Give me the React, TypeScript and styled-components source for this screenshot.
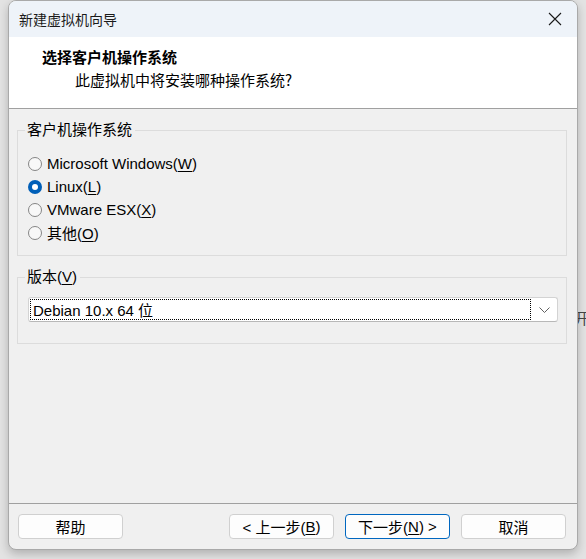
import React from "react";
import styled, { createGlobalStyle } from "styled-components";

const GlobalStyle = createGlobalStyle`
  html, body { margin: 0; padding: 0; }
  body {
    background: #e3e3e3;
    font-family: "Liberation Sans", "Noto Sans CJK SC", sans-serif;
    font-size: 15px;
    color: #000;
    overflow: hidden;
  }
`;

const Page = styled.div`
  position: relative;
  width: 586px;
  height: 559px;
  padding-left: 8px;
  box-sizing: border-box;
  overflow: hidden;
`;

const BehindText = styled.div`
  position: absolute;
  left: 574px;
  top: 307px;
  font-size: 15px;
  color: #444;
  font-family: "Noto Sans CJK SC", sans-serif;
`;

const Window = styled.div`
  position: relative;
  z-index: 1;
  width: 570px;
  height: 550px;
  box-sizing: border-box;
  border: 1px solid #a9a9a9;
  border-radius: 8px;
  background: #f0f0f0;
  display: flex;
  flex-direction: column;
  overflow: hidden;
  box-shadow: 0 4px 10px rgba(0, 0, 0, 0.22);
`;

const TitleBar = styled.div`
  height: 36px;
  background: #eef3f9;
  display: flex;
  align-items: center;
  justify-content: space-between;
  padding: 0 10px 0 10px;
  font-family: "Noto Sans CJK SC", sans-serif;
  font-size: 14px;
  color: #1a1a1a;
`;

const CloseBtn = styled.div`
  width: 24px;
  height: 24px;
  display: flex;
  align-items: center;
  justify-content: center;
`;

const Header = styled.div`
  height: 72px;
  box-sizing: border-box;
  background: #ffffff;
  border-bottom: 1px solid #a0a0a0;
  padding: 10px 0 0 33px;
  display: flex;
  flex-direction: column;
  gap: 3px;
  font-family: "Noto Sans CJK SC", sans-serif;
`;

const Heading = styled.div`
  font-size: 15px;
  font-weight: 700;
  line-height: 20px;
`;

const SubHeading = styled.div`
  font-size: 15px;
  line-height: 20px;
  padding-left: 33px;
`;

const Body = styled.div`
  flex: 1;
  display: flex;
  flex-direction: column;
  padding: 0 10px 0 8px;
`;

const Group = styled.fieldset<{ $top: number; $pad: string }>`
  margin: ${(p) => p.$top}px 0 0 0;
  padding: ${(p) => p.$pad};
  border: 1px solid #dcdcdc;
  border-radius: 0;
  min-width: 0;
`;

const Legend = styled.legend`
  padding: 0 3px 0 2px;
  margin-left: -3px;
  line-height: 20px;
  font-size: 15px;
`;

const RadioRow = styled.label`
  display: flex;
  align-items: center;
  height: 23px;
  gap: 5px;
`;

const RadioCircle = styled.span<{ $on?: boolean }>`
  width: 14px;
  height: 14px;
  box-sizing: border-box;
  border-radius: 50%;
  border: ${(p) => (p.$on ? "none" : "1px solid #858585")};
  background: ${(p) => (p.$on ? "#005fb8" : "#f8f8f8")};
  display: flex;
  align-items: center;
  justify-content: center;
  &::after {
    content: "";
    display: ${(p) => (p.$on ? "block" : "none")};
    width: 6px;
    height: 6px;
    border-radius: 50%;
    background: #ffffff;
  }
`;

const Key = styled.span`
  text-decoration: underline;
  text-underline-offset: 2px;
`;

const Select = styled.div`
  height: 25px;
  box-sizing: border-box;
  background: #ffffff;
  border: 1px solid #d3d3d3;
  border-bottom-color: #b8b8b8;
  border-radius: 3px;
  display: flex;
  align-items: center;
  padding: 1px 0 1px 1px;
`;

const SelectValue = styled.div`
  flex: 1;
  height: 100%;
  box-sizing: border-box;
  border: 1px dotted #000;
  display: flex;
  align-items: center;
  padding-left: 2px;
  font-size: 15px;
`;

const Chevron = styled.div`
  width: 26px;
  display: flex;
  align-items: center;
  justify-content: center;
`;

const Spacer = styled.div`
  flex: 1;
`;

const Footer = styled.div`
  border-top: 1px solid #a0a0a0;
  height: 46px;
  box-sizing: border-box;
  display: flex;
  align-items: flex-start;
  padding: 10px 11px 0 9px;
  gap: 11px;
`;

const Button = styled.button<{ $primary?: boolean; $push?: boolean }>`
  width: 105px;
  height: 25px;
  box-sizing: border-box;
  background: #fdfdfd;
  border: 1px solid ${(p) => (p.$primary ? "#0067c0" : "#d0d0d0")};
  border-radius: 4px;
  font-family: "Liberation Sans", "Noto Sans CJK SC", sans-serif;
  font-size: 15px;
  color: #000;
  padding: 0;
  margin-left: ${(p) => (p.$push ? "auto" : "0")};
  display: flex;
  align-items: center;
  justify-content: center;
`;

const radios = [
  { pre: "Microsoft Windows(", key: "W", post: ")", on: false },
  { pre: "Linux(", key: "L", post: ")", on: true },
  { pre: "VMware ESX(", key: "X", post: ")", on: false },
  { pre: "其他(", key: "O", post: ")", on: false },
];

export default function App() {
  return (
    <>
      <GlobalStyle />
      <Page>
        <BehindText>开</BehindText>
        <Window>
          <TitleBar>
            <span>新建虚拟机向导</span>
            <CloseBtn>
              <svg width="14" height="14" viewBox="0 0 14 14">
                <path d="M1 1 L13 13 M13 1 L1 13" stroke="#1a1a1a" strokeWidth="1.1" fill="none" />
              </svg>
            </CloseBtn>
          </TitleBar>
          <Header>
            <Heading>选择客户机操作系统</Heading>
            <SubHeading>此虚拟机中将安装哪种操作系统?</SubHeading>
          </Header>
          <Body>
            <Group $top={11} $pad="12px 0 11px 10px">
              <Legend>客户机操作系统</Legend>
              {radios.map((r) => (
                <RadioRow key={r.key}>
                  <RadioCircle $on={r.on} />
                  <span>
                    {r.pre}
                    <Key>{r.key}</Key>
                    {r.post}
                  </span>
                </RadioRow>
              ))}
            </Group>
            <Group $top={11} $pad="10px 8px 21px 10px">
              <Legend>
                版本(<Key>V</Key>)
              </Legend>
              <Select>
                <SelectValue>Debian 10.x 64 位</SelectValue>
                <Chevron>
                  <svg width="11" height="6" viewBox="0 0 11 6">
                    <path d="M0.5 0.5 L5.5 5.5 L10.5 0.5" stroke="#606060" strokeWidth="1" fill="none" />
                  </svg>
                </Chevron>
              </Select>
            </Group>
            <Spacer />
          </Body>
          <Footer>
            <Button>帮助</Button>
            <Button $push>
              &lt; 上一步(<Key>B</Key>)
            </Button>
            <Button $primary>
              下一步(<Key>N</Key>) &gt;
            </Button>
            <Button>取消</Button>
          </Footer>
        </Window>
      </Page>
    </>
  );
}
